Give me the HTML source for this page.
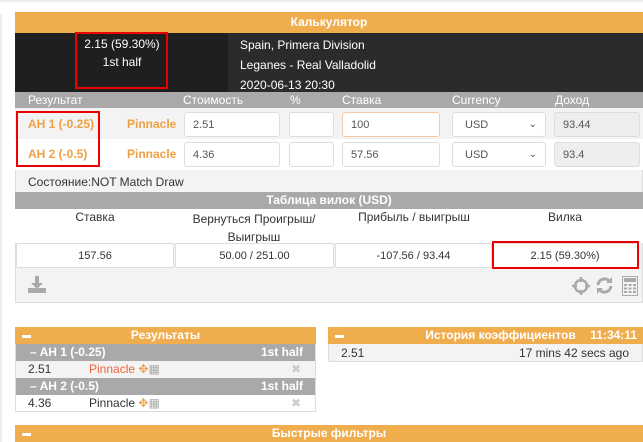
<!DOCTYPE html>
<html><head><meta charset="utf-8"><style>
*{box-sizing:border-box;margin:0;padding:0}
body{width:643px;height:442px;background:#fff;font-family:"Liberation Sans",sans-serif;font-size:12px;color:#333;position:relative;overflow:hidden}
.a{position:absolute}
.or{background:#f0ad4e;color:#fff;font-weight:bold;text-align:center}
.inp{position:absolute;background:#fff;border:1px solid #ddd;border-radius:3px;font-size:11px;color:#555;padding-left:8px;line-height:24px}
.red{position:absolute;border:2px solid #e00}
.gh{color:#fff}
.cell{position:absolute;background:#fff;border:1px solid #ddd;border-radius:2px;text-align:center;font-size:11px;line-height:24px;top:243px;height:25px}
.minus{position:absolute;width:9px;height:3px;background:#fff}
</style></head><body>
<div class="a" style="left:0;top:0;width:643px;height:2px;background:#eee"></div>
<div class="a" style="left:0;top:14px;width:2px;height:428px;background:#eee"></div>
<!-- calculator panel -->
<div class="a" style="left:15px;top:12px;width:628px;height:291px;background:#f3f3f3;border:1px solid #ddd"></div>
<div class="a or" style="left:15px;top:12px;width:628px;height:21px;line-height:21px;font-size:12px">Калькулятор</div>
<div class="a" style="left:15px;top:33px;width:213px;height:59px;background:#1f1f1f"></div>
<div class="a" style="left:228px;top:33px;width:415px;height:59px;background:#2b2b2b"></div>
<div class="a" style="left:76px;top:35px;width:92px;text-align:center;color:#fff;line-height:18px;font-size:12px">2.15 (59.30%)<br>1st half</div>
<div class="red" style="left:75px;top:32px;width:93px;height:57px"></div>
<div class="a" style="left:240px;top:35px;color:#fff;line-height:20px;font-size:12px">Spain, Primera Division<br>Leganes - Real Valladolid<br>2020-06-13 20:30</div>
<div class="a" style="left:15px;top:92px;width:628px;height:16px;background:#a9a9a9"></div>
<div class="a gh" style="left:28px;top:93px">Результат</div>
<div class="a gh" style="left:183px;top:93px">Стоимость</div>
<div class="a gh" style="left:290px;top:93px">%</div>
<div class="a gh" style="left:342px;top:93px">Ставка</div>
<div class="a gh" style="left:452px;top:93px">Currency</div>
<div class="a gh" style="left:555px;top:93px">Доход</div>
<div class="a" style="left:15px;top:108px;width:628px;height:31px;background:#f3f3f3"></div>
<div class="a" style="left:15px;top:139px;width:628px;height:31px;background:#fff"></div>
<div class="a" style="left:28px;top:117px;color:#f0a040;font-weight:bold">AH 1 (-0.25)</div>
<div class="a" style="left:28px;top:147px;color:#f0a040;font-weight:bold">AH 2 (-0.5)</div>
<div class="a" style="left:127px;top:117px;color:#f0a040;font-weight:bold">Pinnacle</div>
<div class="a" style="left:127px;top:147px;color:#f0a040;font-weight:bold">Pinnacle</div>
<div class="red" style="left:16px;top:111px;width:84px;height:56px"></div>
<div class="inp" style="left:184px;top:112px;width:96px;height:25px">2.51</div>
<div class="inp" style="left:184px;top:142px;width:96px;height:25px">4.36</div>
<div class="inp" style="left:289px;top:112px;width:45px;height:25px"></div>
<div class="inp" style="left:289px;top:142px;width:45px;height:25px"></div>
<div class="inp" style="left:342px;top:112px;width:98px;height:25px;border-color:#f3c9a8">100</div>
<div class="inp" style="left:342px;top:142px;width:98px;height:25px">57.56</div>
<div class="inp" style="left:452px;top:112px;width:94px;height:25px;padding-left:12px">USD<span style="position:absolute;right:8px;font-size:10px">&#8964;</span></div>
<div class="inp" style="left:452px;top:142px;width:94px;height:25px;padding-left:12px">USD<span style="position:absolute;right:8px;font-size:10px">&#8964;</span></div>
<div class="inp" style="left:554px;top:112px;width:86px;height:25px;background:#eee">93.44</div>
<div class="inp" style="left:554px;top:142px;width:86px;height:25px;background:#eee">93.4</div>
<div class="a" style="left:28px;top:175px">Состояние:NOT Match Draw</div>
<div class="a" style="left:15px;top:192px;width:628px;height:17px;background:#a9a9a9;color:#fff;font-weight:bold;text-align:center;line-height:17px">Таблица вилок (USD)</div>
<div class="a" style="left:15px;top:209px;width:628px;height:34px;background:#fff"></div>
<div class="a" style="left:16px;top:210px;width:158px;text-align:center">Ставка</div>
<div class="a" style="left:175px;top:210px;width:158px;text-align:center;line-height:18px">Вернуться Проигрыш/<br>Выигрыш</div>
<div class="a" style="left:335px;top:210px;width:158px;text-align:center">Прибыль / выигрыш</div>
<div class="a" style="left:492px;top:210px;width:146px;text-align:center">Вилка</div>
<div class="cell" style="left:16px;width:158px">157.56</div>
<div class="cell" style="left:175px;width:159px">50.00 / 251.00</div>
<div class="cell" style="left:335px;width:157px">-107.56 / 93.44</div>
<div class="cell" style="left:492px;width:146px">2.15 (59.30%)</div>
<div class="red" style="left:492px;top:241px;width:147px;height:28px"></div>
<!-- icons -->
<svg class="a" style="left:27px;top:276px" width="20" height="18" viewBox="0 0 20 18"><path d="M8 0h4v7h4l-6 6-6-6h4z" fill="#aaa"/><rect x="1" y="12" width="18" height="5" fill="#aaa"/></svg>
<svg class="a" style="left:571px;top:276px" width="20" height="20" viewBox="0 0 20 20" fill="none" stroke="#aaa" stroke-width="2.5"><circle cx="10" cy="10" r="6"/><path d="M10 1v5M10 14v5M1 10h5M14 10h5"/></svg>
<svg class="a" style="left:595px;top:276px" width="19" height="19" viewBox="0 0 19 19" fill="none" stroke="#aaa" stroke-width="3"><path d="M3 9a6.5 6.5 0 0 1 12-3M16 10a6.5 6.5 0 0 1-12 3"/><path d="M17 1v6h-6z M2 18v-6h6z" fill="#aaa" stroke-width="0"/></svg>
<svg class="a" style="left:622px;top:276px" width="16" height="20" viewBox="0 0 16 20"><rect x="0.5" y="0.5" width="15" height="19" fill="none" stroke="#aaa"/><rect x="2" y="2" width="12" height="4" fill="#aaa"/><g fill="#aaa"><rect x="2" y="8" width="3" height="2"/><rect x="6.5" y="8" width="3" height="2"/><rect x="11" y="8" width="3" height="2"/><rect x="2" y="11.5" width="3" height="2"/><rect x="6.5" y="11.5" width="3" height="2"/><rect x="11" y="11.5" width="3" height="2"/><rect x="2" y="15" width="3" height="2"/><rect x="6.5" y="15" width="3" height="2"/><rect x="11" y="15" width="3" height="2"/></g></svg>
<!-- results panel -->
<div class="a" style="left:15px;top:327px;width:301px;height:85px;border:1px solid #ddd;background:#fff"></div>
<div class="a or" style="left:15px;top:327px;width:301px;height:17px;line-height:17px">Результаты</div>
<div class="minus" style="left:22px;top:335px"></div>
<div class="a" style="left:16px;top:344px;width:299px;height:17px;background:#a9a9a9;color:#fff;font-weight:bold;line-height:17px"><span style="margin-left:14px">&#8211; AH 1 (-0.25)</span><span style="position:absolute;right:12px">1st half</span></div>
<div class="a" style="left:16px;top:361px;width:299px;height:17px;background:#f3f3f3;line-height:17px"><span style="margin-left:12px">2.51</span><span style="position:absolute;left:73px;color:#e8663a">Pinnacle <span style="color:#f0a040">&#10021;</span><span style="color:#aaa">&#9638;</span></span><span style="position:absolute;right:14px;color:#ccc">&#10006;</span></div>
<div class="a" style="left:16px;top:378px;width:299px;height:17px;background:#a9a9a9;color:#fff;font-weight:bold;line-height:17px"><span style="margin-left:14px">&#8211; AH 2 (-0.5)</span><span style="position:absolute;right:12px">1st half</span></div>
<div class="a" style="left:16px;top:395px;width:299px;height:16px;background:#fff;line-height:17px"><span style="margin-left:12px">4.36</span><span style="position:absolute;left:73px">Pinnacle <span style="color:#f0a040">&#10021;</span><span style="color:#aaa">&#9638;</span></span><span style="position:absolute;right:14px;color:#ccc">&#10006;</span></div>
<!-- history -->
<div class="a" style="left:328px;top:327px;width:315px;height:35px;border:1px solid #ddd;background:#f3f3f3"></div>
<div class="a or" style="left:328px;top:327px;width:315px;height:17px;line-height:17px"><span style="margin-left:30px">История коэффициентов</span><span style="position:absolute;right:6px">11:34:11</span></div>
<div class="minus" style="left:335px;top:335px"></div>
<div class="a" style="left:341px;top:346px">2.51</div>
<div class="a" style="right:14px;top:346px">17 mins 42 secs ago</div>
<!-- quick filters -->
<div class="a or" style="left:15px;top:425px;width:628px;height:17px;line-height:17px">Быстрые фильтры</div>
<div class="minus" style="left:22px;top:433px"></div>
</body></html>
